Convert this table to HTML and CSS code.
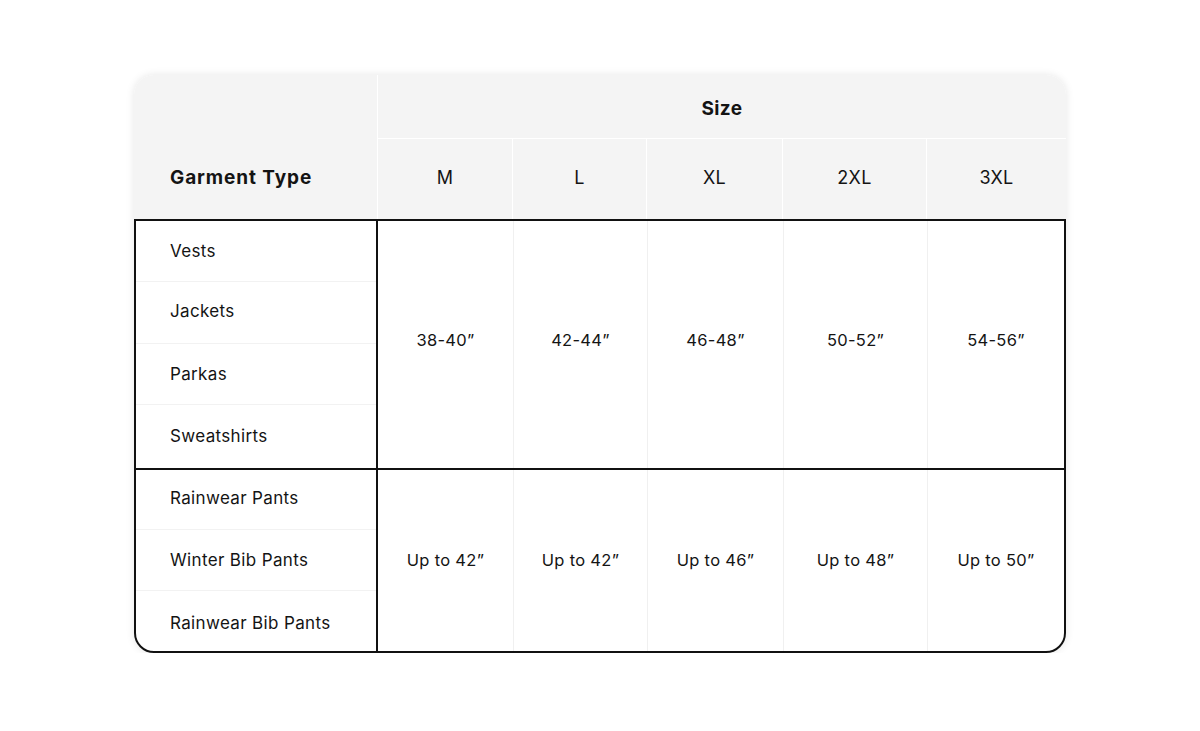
FILE: index.html
```html
<!DOCTYPE html>
<html lang="en">
<head>
<meta charset="utf-8">
<title>Size Chart</title>
<link rel="stylesheet" href="styles.css">
</head>
<body>
<div class="card">
  <div class="head">
    <div class="h-garment">Garment Type</div>
    <div class="h-size">Size</div>
    <div class="h-col">M</div>
    <div class="h-col">L</div>
    <div class="h-col">XL</div>
    <div class="h-col">2XL</div>
    <div class="h-col h-last">3XL</div>
  </div>
  <div class="body">
    <div class="group g1">
      <div class="names">
        <div class="name">Vests</div>
        <div class="name">Jackets</div>
        <div class="name">Parkas</div>
        <div class="name">Sweatshirts</div>
      </div>
      <div class="val first">38-40”</div>
      <div class="val">42-44”</div>
      <div class="val">46-48”</div>
      <div class="val">50-52”</div>
      <div class="val last">54-56”</div>
    </div>
    <div class="group g2">
      <div class="names">
        <div class="name">Rainwear Pants</div>
        <div class="name">Winter Bib Pants</div>
        <div class="name">Rainwear Bib Pants</div>
      </div>
      <div class="val first">Up to 42”</div>
      <div class="val">Up to 42”</div>
      <div class="val">Up to 46”</div>
      <div class="val">Up to 48”</div>
      <div class="val last">Up to 50”</div>
    </div>
  </div>
</div>
</body>
</html>
```
FILE: styles.css
```css
* { box-sizing: border-box; }
html, body { margin: 0; padding: 0; background: #ffffff; }
body {
  font-family: Inter, "Open Sans", "DejaVu Sans", sans-serif;
  color: #141414;
  padding-top: 75px;
}
.card {
  width: 932px;
  margin: 0 auto;
  border-radius: 20px;
  background: #ffffff;
  box-shadow: 0 0 8px rgba(0,0,0,0.10);
}
.head {
  display: grid;
  grid-template-columns: 244px 135px 134px 136px 144px 139px;
  grid-template-rows: 64px 80px;
  background: #f4f4f4;
  border-radius: 20px 20px 0 0;
}
.h-garment {
  grid-row: 1 / span 2;
  grid-column: 1;
  display: flex;
  align-items: center;
  padding: 60px 0 0 36px;
  font-weight: 700;
  font-size: 19px;
  letter-spacing: 0.9px;
  border-right: 1px solid #ffffff;
}
.h-size {
  grid-column: 2 / span 5;
  display: flex;
  align-items: center;
  justify-content: center;
  padding-top: 3px;
  font-weight: 700;
  font-size: 19px;
  letter-spacing: 0.4px;
  border-bottom: 1px solid #ffffff;
}
.h-col {
  display: flex;
  align-items: center;
  justify-content: center;
  padding-bottom: 4px;
  font-size: 18px;
  letter-spacing: 0.3px;
  border-right: 1px solid #ffffff;
}
.h-last { border-right: none; }
.body {
  border: 2px solid #111111;
  border-radius: 0 0 20px 20px;
  overflow: hidden;
}
.group {
  display: grid;
  grid-template-columns: 242px 135px 134px 136px 144px 137px;
}
.g2 { border-top: 2px solid #111111; }
.names {
  display: flex;
  flex-direction: column;
  border-right: 2px solid #111111;
}
.name {
  display: flex;
  align-items: center;
  padding-left: 34px;
  font-size: 17px;
  letter-spacing: 0.35px;
  border-bottom: 1px solid #f2f2f2;
}
.name:last-child { border-bottom: none; }
.g1 .name { height: 61px; padding-bottom: 1px; }
.g1 .name:nth-child(2) { height: 62px; padding-bottom: 3px; }
.g1 .name:last-child { height: 63px; padding-bottom: 2px; }
.g2 .name:nth-child(1) { height: 60px; padding-bottom: 3px; }
.g2 .name:nth-child(2) { height: 61px; padding-bottom: 0; }
.g2 .name:nth-child(3) { height: 60px; padding-top: 3px; }
.val {
  display: flex;
  align-items: center;
  justify-content: center;
  font-size: 16.5px;
  letter-spacing: 0.3px;
  border-left: 1px solid #f0f0f0;
}
.g1 .val { padding-bottom: 10px; }
.g2 .val { padding-bottom: 2px; }
.val.first { border-left: none; }
```
